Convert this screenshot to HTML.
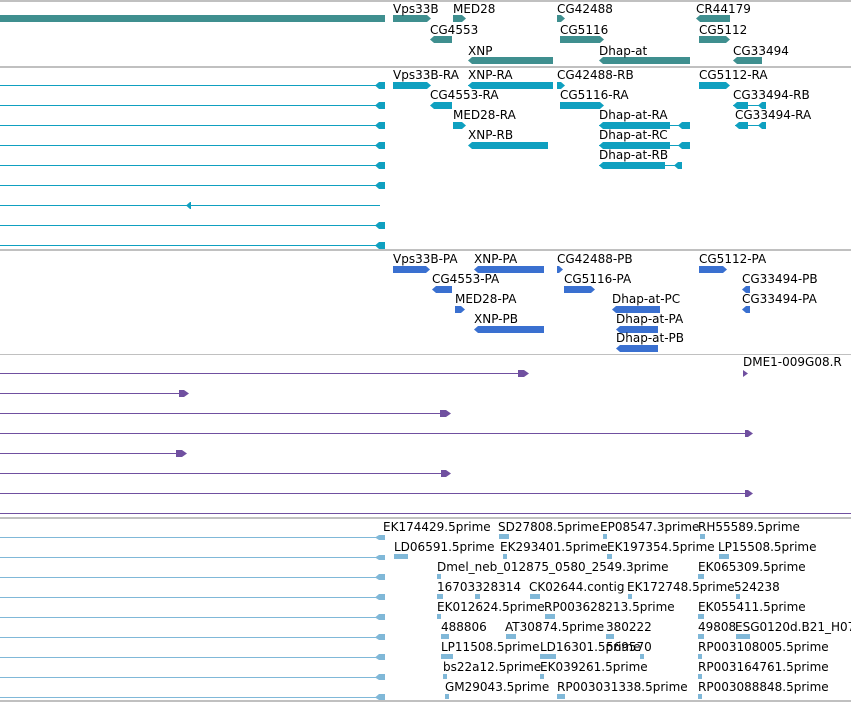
<!DOCTYPE html>
<html><head><meta charset="utf-8"><style>
html,body{margin:0;padding:0;background:#fff;width:851px;height:702px;overflow:hidden}
svg{display:block}
text{font-family:"DejaVu Sans","Liberation Sans",sans-serif;font-size:12px;fill:#000}
</style></head><body>
<svg width="851" height="702" viewBox="0 0 851 702">
<!-- separators -->
<rect x="0" y="0" width="851" height="2" fill="#c0c0c0"/>
<rect x="0" y="66" width="851" height="2" fill="#c0c0c0"/>
<rect x="0" y="249" width="851" height="2" fill="#c0c0c0"/>
<rect x="0" y="354" width="851" height="1" fill="#c0c0c0"/>
<rect x="0" y="517" width="851" height="2" fill="#c0c0c0"/>
<rect x="0" y="700" width="851" height="2" fill="#c0c0c0"/>

<!-- Track 1 genes -->
<g fill="#3f8f8f">
<rect x="0" y="15" width="385" height="7"/>
<polygon points="393,15 427,15 431,18.5 427,22 393,22"/>
<polygon points="453,15 462,15 466,18.5 462,22 453,22"/>
<polygon points="557,15 561,15 565,18.5 561,22 557,22"/>
<polygon points="700,15 730,15 730,22 700,22 696,18.5"/>
<polygon points="434,36 452,36 452,43 434,43 430,39.5"/>
<polygon points="560,36 600,36 604,39.5 600,43 560,43"/>
<polygon points="699,36 726,36 730,39.5 726,43 699,43"/>
<polygon points="472,57 553,57 553,64 472,64 468,60.5"/>
<polygon points="603,57 690,57 690,64 603,64 599,60.5"/>
<polygon points="737,57 762,57 762,64 737,64 733,60.5"/>
</g>
<text x="393" y="13">Vps33B</text><text x="453" y="13">MED28</text><text x="557" y="13">CG42488</text><text x="696" y="13">CR44179</text>
<text x="430" y="34">CG4553</text><text x="560" y="34">CG5116</text><text x="699" y="34">CG5112</text>
<text x="468" y="55">XNP</text><text x="599" y="55">Dhap-at</text><text x="733" y="55">CG33494</text>

<!-- Track 2 transcripts -->
<g stroke="#0fa0c0" stroke-width="1">
<line x1="0" y1="85.5" x2="380" y2="85.5"/><line x1="0" y1="105.5" x2="380" y2="105.5"/>
<line x1="0" y1="125.5" x2="380" y2="125.5"/><line x1="0" y1="145.5" x2="380" y2="145.5"/>
<line x1="0" y1="165.5" x2="380" y2="165.5"/><line x1="0" y1="185.5" x2="380" y2="185.5"/>
<line x1="0" y1="205.5" x2="380" y2="205.5"/><line x1="0" y1="225.5" x2="380" y2="225.5"/>
<line x1="0" y1="245.5" x2="380" y2="245.5"/>
<line x1="468" y1="85.5" x2="553" y2="85.5"/>
<line x1="599" y1="125.5" x2="690" y2="125.5"/><line x1="599" y1="145.5" x2="690" y2="145.5"/><line x1="599" y1="165.5" x2="682" y2="165.5"/>
<line x1="733" y1="105.5" x2="766" y2="105.5"/><line x1="735" y1="125.5" x2="766" y2="125.5"/>
</g>
<g fill="#0fa0c0">
<polygon points="379,82 385,82 385,89 379,89 375,85.5"/><polygon points="379,102 385,102 385,109 379,109 375,105.5"/>
<polygon points="379,122 385,122 385,129 379,129 375,125.5"/><polygon points="379,142 385,142 385,149 379,149 375,145.5"/>
<polygon points="379,162 385,162 385,169 379,169 375,165.5"/><polygon points="379,182 385,182 385,189 379,189 375,185.5"/>
<polygon points="190,202 191,202 191,209 190,209 186,205.5"/><polygon points="379,222 385,222 385,229 379,229 375,225.5"/>
<polygon points="379,242 385,242 385,249 379,249 375,245.5"/>
<polygon points="393,82 427,82 431,85.5 427,89 393,89"/>
<polygon points="472,82 553,82 553,89 472,89 468,85.5"/>
<polygon points="557,82 561,82 565,85.5 561,89 557,89"/>
<polygon points="699,82 726,82 730,85.5 726,89 699,89"/>
<polygon points="434,102 452,102 452,109 434,109 430,105.5"/>
<polygon points="560,102 600,102 604,105.5 600,109 560,109"/>
<polygon points="737,102 748,102 748,109 737,109 733,105.5"/><polygon points="762,102 766,102 766,109 762,109 758,105.5"/>
<polygon points="453,122 462,122 466,125.5 462,129 453,129"/>
<polygon points="603,122 670,122 670,129 603,129 599,125.5"/><polygon points="682,122 690,122 690,129 682,129 678,125.5"/>
<polygon points="739,122 748,122 748,129 739,129 735,125.5"/><polygon points="762,122 766,122 766,129 762,129 758,125.5"/>
<polygon points="472,142 548,142 548,149 472,149 468,145.5"/>
<polygon points="603,142 670,142 670,149 603,149 599,145.5"/><polygon points="682,142 690,142 690,149 682,149 678,145.5"/>
<polygon points="603,162 665,162 665,169 603,169 599,165.5"/><polygon points="678,162 682,162 682,169 678,169 674,165.5"/>
</g>
<text x="393" y="79">Vps33B-RA</text><text x="468" y="79">XNP-RA</text><text x="557" y="79">CG42488-RB</text><text x="699" y="79">CG5112-RA</text>
<text x="430" y="99">CG4553-RA</text><text x="560" y="99">CG5116-RA</text><text x="733" y="99">CG33494-RB</text>
<text x="453" y="119">MED28-RA</text><text x="599" y="119">Dhap-at-RA</text><text x="735" y="119">CG33494-RA</text>
<text x="468" y="139">XNP-RB</text><text x="599" y="139">Dhap-at-RC</text>
<text x="599" y="159">Dhap-at-RB</text>

<!-- Track 3 proteins -->
<g fill="#3a70d0">
<polygon points="393,266 426,266 430,269.5 426,273 393,273"/>
<polygon points="478,266 544,266 544,273 478,273 474,269.5"/>
<polygon points="557,266 559,266 563,269.5 559,273 557,273"/>
<polygon points="699,266 723,266 727,269.5 723,273 699,273"/>
<polygon points="436,286 452,286 452,293 436,293 432,289.5"/>
<polygon points="564,286 591,286 595,289.5 591,293 564,293"/>
<polygon points="746,286 750,286 750,293 746,293 742,289.5"/>
<polygon points="455,306 461,306 465,309.5 461,313 455,313"/>
<polygon points="616,306 660,306 660,313 616,313 612,309.5"/>
<polygon points="746,306 750,306 750,313 746,313 742,309.5"/>
<polygon points="478,326 544,326 544,333 478,333 474,329.5"/>
<polygon points="620,326 658,326 658,333 620,333 616,329.5"/>
<polygon points="620,345 658,345 658,352 620,352 616,348.5"/>
</g>
<text x="393" y="263">Vps33B-PA</text><text x="474" y="263">XNP-PA</text><text x="557" y="263">CG42488-PB</text><text x="699" y="263">CG5112-PA</text>
<text x="432" y="283">CG4553-PA</text><text x="564" y="283">CG5116-PA</text><text x="742" y="283">CG33494-PB</text>
<text x="455" y="303">MED28-PA</text><text x="612" y="303">Dhap-at-PC</text><text x="742" y="303">CG33494-PA</text>
<text x="474" y="323">XNP-PB</text><text x="616" y="323">Dhap-at-PA</text>
<text x="616" y="342">Dhap-at-PB</text>

<!-- Track 4 purple -->
<g stroke="#7050a0" stroke-width="1">
<line x1="0" y1="373.5" x2="522" y2="373.5"/><line x1="0" y1="393.5" x2="182" y2="393.5"/>
<line x1="0" y1="413.5" x2="444" y2="413.5"/><line x1="0" y1="433.5" x2="747" y2="433.5"/>
<line x1="0" y1="453.5" x2="180" y2="453.5"/><line x1="0" y1="473.5" x2="444" y2="473.5"/>
<line x1="0" y1="493.5" x2="747" y2="493.5"/>
</g>
<rect x="0" y="513" width="851" height="1" fill="#7050a0"/>
<g fill="#7050a0">
<polygon points="518,370 524,370 529,373.5 524,377 518,377"/>
<polygon points="179,390 184,390 189,393.5 184,397 179,397"/>
<polygon points="440,410 446,410 451,413.5 446,417 440,417"/>
<polygon points="745,430 748,430 753,433.5 748,437 745,437"/>
<polygon points="176,450 182,450 187,453.5 182,457 176,457"/>
<polygon points="441,470 446,470 451,473.5 446,477 441,477"/>
<polygon points="745,490 748,490 753,493.5 748,497 745,497"/>
<polygon points="743,370 743,377 748,373.5"/>
</g>
<text x="743" y="366">DME1-009G08.R</text>

<!-- Track 5 ESTs -->
<g stroke="#80b8d8" stroke-width="1">
<line x1="0" y1="537.5" x2="380" y2="537.5"/><line x1="0" y1="557.5" x2="380" y2="557.5"/>
<line x1="0" y1="577.5" x2="380" y2="577.5"/><line x1="0" y1="597.5" x2="380" y2="597.5"/>
<line x1="0" y1="617.5" x2="380" y2="617.5"/><line x1="0" y1="637.5" x2="380" y2="637.5"/>
<line x1="0" y1="657.5" x2="380" y2="657.5"/><line x1="0" y1="677.5" x2="380" y2="677.5"/>
<line x1="0" y1="697.5" x2="380" y2="697.5"/>
</g>
<g fill="#80b8d8">
<polygon points="379,535 385,535 385,540 379,540 375,537.5"/>
<polygon points="379,555 385,555 385,560 379,560 375,557.5"/>
<polygon points="379,574 385,574 385,580 379,580 375,577.5"/>
<polygon points="379,594 385,594 385,600 379,600 375,597.5"/>
<polygon points="379,614 385,614 385,620 379,620 375,617.5"/>
<polygon points="379,634 385,634 385,640 379,640 375,637.5"/>
<polygon points="379,654 385,654 385,660 379,660 375,657.5"/>
<polygon points="379,674 385,674 385,680 379,680 375,677.5"/>
<polygon points="379,694 385,694 385,700 379,700 375,697.5"/>
<!-- small feature marks -->
<rect x="499" y="534" width="10" height="5"/><rect x="603" y="534" width="4" height="5"/><rect x="700" y="534" width="5" height="5"/>
<rect x="394" y="554" width="14" height="5"/><rect x="503" y="554" width="4" height="5"/><rect x="607" y="554" width="5" height="5"/><rect x="719" y="554" width="10" height="5"/>
<rect x="437" y="574" width="4" height="5"/><rect x="698" y="574" width="6" height="5"/>
<rect x="437" y="594" width="6" height="5"/><rect x="475" y="594" width="5" height="5"/><rect x="530" y="594" width="10" height="5"/><rect x="628" y="594" width="4" height="5"/><rect x="736" y="594" width="4" height="5"/>
<rect x="437" y="614" width="4" height="5"/><rect x="545" y="614" width="10" height="5"/><rect x="698" y="614" width="6" height="5"/>
<rect x="441" y="634" width="8" height="5"/><rect x="506" y="634" width="10" height="5"/><rect x="606" y="634" width="8" height="5"/><rect x="698" y="634" width="6" height="5"/><rect x="736" y="634" width="14" height="5"/>
<rect x="441" y="654" width="12" height="5"/><rect x="540" y="654" width="16" height="5"/><rect x="640" y="654" width="4" height="5"/><rect x="698" y="654" width="4" height="5"/>
<rect x="443" y="674" width="4" height="5"/><rect x="540" y="674" width="4" height="5"/><rect x="698" y="674" width="4" height="5"/>
<rect x="445" y="694" width="4" height="5"/><rect x="557" y="694" width="8" height="5"/><rect x="698" y="694" width="4" height="5"/>
</g>
<text x="383" y="531">EK174429.5prime</text><text x="498" y="531">SD27808.5prime</text><text x="600" y="531">EP08547.3prime</text><text x="698" y="531">RH55589.5prime</text>
<text x="394" y="551">LD06591.5prime</text><text x="500" y="551">EK293401.5prime</text><text x="607" y="551">EK197354.5prime</text><text x="718" y="551">LP15508.5prime</text>
<text x="437" y="571">Dmel_neb_012875_0580_2549.3prime</text><text x="698" y="571">EK065309.5prime</text>
<text x="437" y="591">16703328314</text><text x="529" y="591">CK02644.contig</text><text x="627" y="591">EK172748.5prime</text><text x="734" y="591">524238</text>
<text x="437" y="611">EK012624.5prime</text><text x="544" y="611">RP003628213.5prime</text><text x="698" y="611">EK055411.5prime</text>
<text x="441" y="631">488806</text><text x="505" y="631">AT30874.5prime</text><text x="606" y="631">380222</text><text x="698" y="631">49808</text><text x="735" y="631">ESG0120d.B21_H07</text>
<text x="441" y="651">LP11508.5prime</text><text x="540" y="651">LD16301.5prime</text><text x="606" y="651">569570</text><text x="698" y="651">RP003108005.5prime</text>
<text x="443" y="671">bs22a12.5prime</text><text x="540" y="671">EK039261.5prime</text><text x="698" y="671">RP003164761.5prime</text>
<text x="445" y="691">GM29043.5prime</text><text x="557" y="691">RP003031338.5prime</text><text x="698" y="691">RP003088848.5prime</text>
</svg>
</body></html>
